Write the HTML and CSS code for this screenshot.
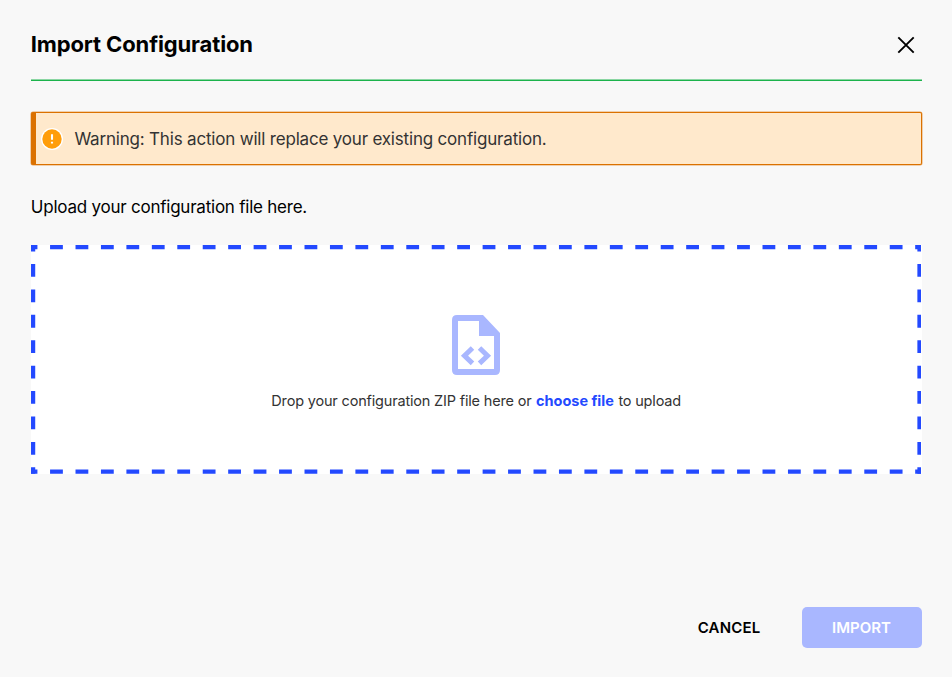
FILE: index.html
```html
<!DOCTYPE html>
<html lang="en">
<head>
<meta charset="utf-8">
<title>Import Configuration</title>
<link rel="stylesheet" href="styles.css">
</head>
<body>
<main class="dialog">
  <header class="header">
    <h1 class="title">Import Configuration</h1>
    <button class="close" aria-label="Close">
      <svg width="18" height="18" viewBox="0 0 18 18"><path d="M1.3 1.3L16.7 16.7M16.7 1.3L1.3 16.7" stroke="#000" stroke-width="1.9" fill="none"/></svg>
    </button>
  </header>
  <div class="warning">
    <svg class="warning-icon" width="22" height="22" viewBox="0 0 22 22"><circle cx="11" cy="11" r="11" fill="#fff"/><circle cx="11" cy="11" r="9.7" fill="#ff9d0a"/><path d="M11 6.3V11.7M11 13.7V15.6" stroke="#fff" stroke-width="2.1"/></svg>
    <span class="warning-text">Warning: This action will replace your existing configuration.</span>
  </div>
  <p class="intro">Upload your configuration file here.</p>
  <section class="dropzone">
    <svg class="dashes" width="890.6" height="228.7" viewBox="0 0 890.6 228.7">
      <g stroke="#2349ff" stroke-width="4.2" fill="none">
        <path d="M0 2.1H890.6M0 226.6H890.6" stroke-dasharray="12.8 12.646" stroke-dashoffset="6.4"/>
        <path d="M2.1 0V228.7M888.5 0V228.7" stroke-dasharray="12.8 12.611" stroke-dashoffset="6.4"/>
      </g>
    </svg>
    <svg class="file-icon" width="48" height="60" viewBox="0 0 48 60"><path fill="#a9b7ff" fill-rule="evenodd" d="M5 0H31L48 18V55Q48 60 43 60H5Q0 60 0 55V5Q0 0 5 0ZM6 6V54H42V21H27V6Z"/><path d="M20.5 33L12.5 40.7L20.5 48.4M27.5 33L35.5 40.7L27.5 48.4" stroke="#a9b7ff" stroke-width="5" fill="none"/></svg>
    <p class="hint"><span class="hint-start">Drop your configuration ZIP file here or</span><a class="choose">choose file</a><span class="hint-end">to upload</span></p>
  </section>
  <footer class="footer">
    <button class="cancel">CANCEL</button>
    <button class="import"><span>IMPORT</span></button>
  </footer>
</main>
</body>
</html>
```

FILE: styles.css
```css
* { box-sizing: border-box; }
body {
  margin: 0;
  background: #f8f8f8;
  font-family: Inter, "Liberation Sans", sans-serif;
  color: #000;
}
button { font-family: inherit; border: 0; background: none; padding: 0; }
h1, p { margin: 0; }
.dialog {
  height: 677px;
  padding: 0 30.5px 29.5px 30.8px;
  display: flex;
  flex-direction: column;
}
.header {
  height: 81px;
  flex: none;
  display: flex;
  align-items: flex-start;
  justify-content: space-between;
  border-bottom: 1px solid #1cb34c;
  box-shadow: inset 0 -1px rgba(28, 179, 76, 0.5);
}
.title {
  margin-top: 30px;
  font-size: 22px;
  line-height: 28px;
  font-weight: 700;
  letter-spacing: -0.14px;
}
.close { margin: 36px 6.5px 0 0; width: 18px; height: 18px; }
.close svg { display: block; }
.warning {
  flex: none;
  height: 53px;
  margin-top: 31px;
  display: flex;
  align-items: center;
  gap: 11px;
  padding-left: 5.6px;
  border: 1px solid #db7100;
  border-left-width: 5px;
  border-radius: 2px;
  background: #ffe9cc;
  box-shadow: 0 0 0 0.5px rgba(219, 113, 0, 0.6);
}
.warning-text { font-size: 17px; line-height: 24px; color: #333; letter-spacing: -0.19px; white-space: nowrap; }
.intro { margin-top: 30px; font-size: 17px; line-height: 24px; letter-spacing: -0.23px; }
.dropzone {
  position: relative;
  flex: none;
  height: 228.7px;
  margin-top: 26.3px;
  background: #fff;
  display: flex;
  flex-direction: column;
  align-items: center;
}
.dashes { position: absolute; inset: 0; }
.file-icon { margin-top: 70px; flex: none; }
.hint {
  margin-top: 16px;
  display: flex;
  gap: 4.5px;
  font-size: 14.5px;
  line-height: 20px;
  letter-spacing: -0.18px;
  color: #333;
  white-space: nowrap;
}
.choose { color: #2349ff; font-weight: 700; letter-spacing: 0; }
.footer {
  margin-top: auto;
  display: flex;
  justify-content: flex-end;
  align-items: center;
  gap: 41px;
}
.cancel, .import { font-size: 15px; font-weight: 600; letter-spacing: 0; }
.cancel { color: #000; letter-spacing: 0.2px; }
.import { width: 120px; height: 40.7px; border-radius: 5px; background: #a9b7ff; color: #fff; }
```
